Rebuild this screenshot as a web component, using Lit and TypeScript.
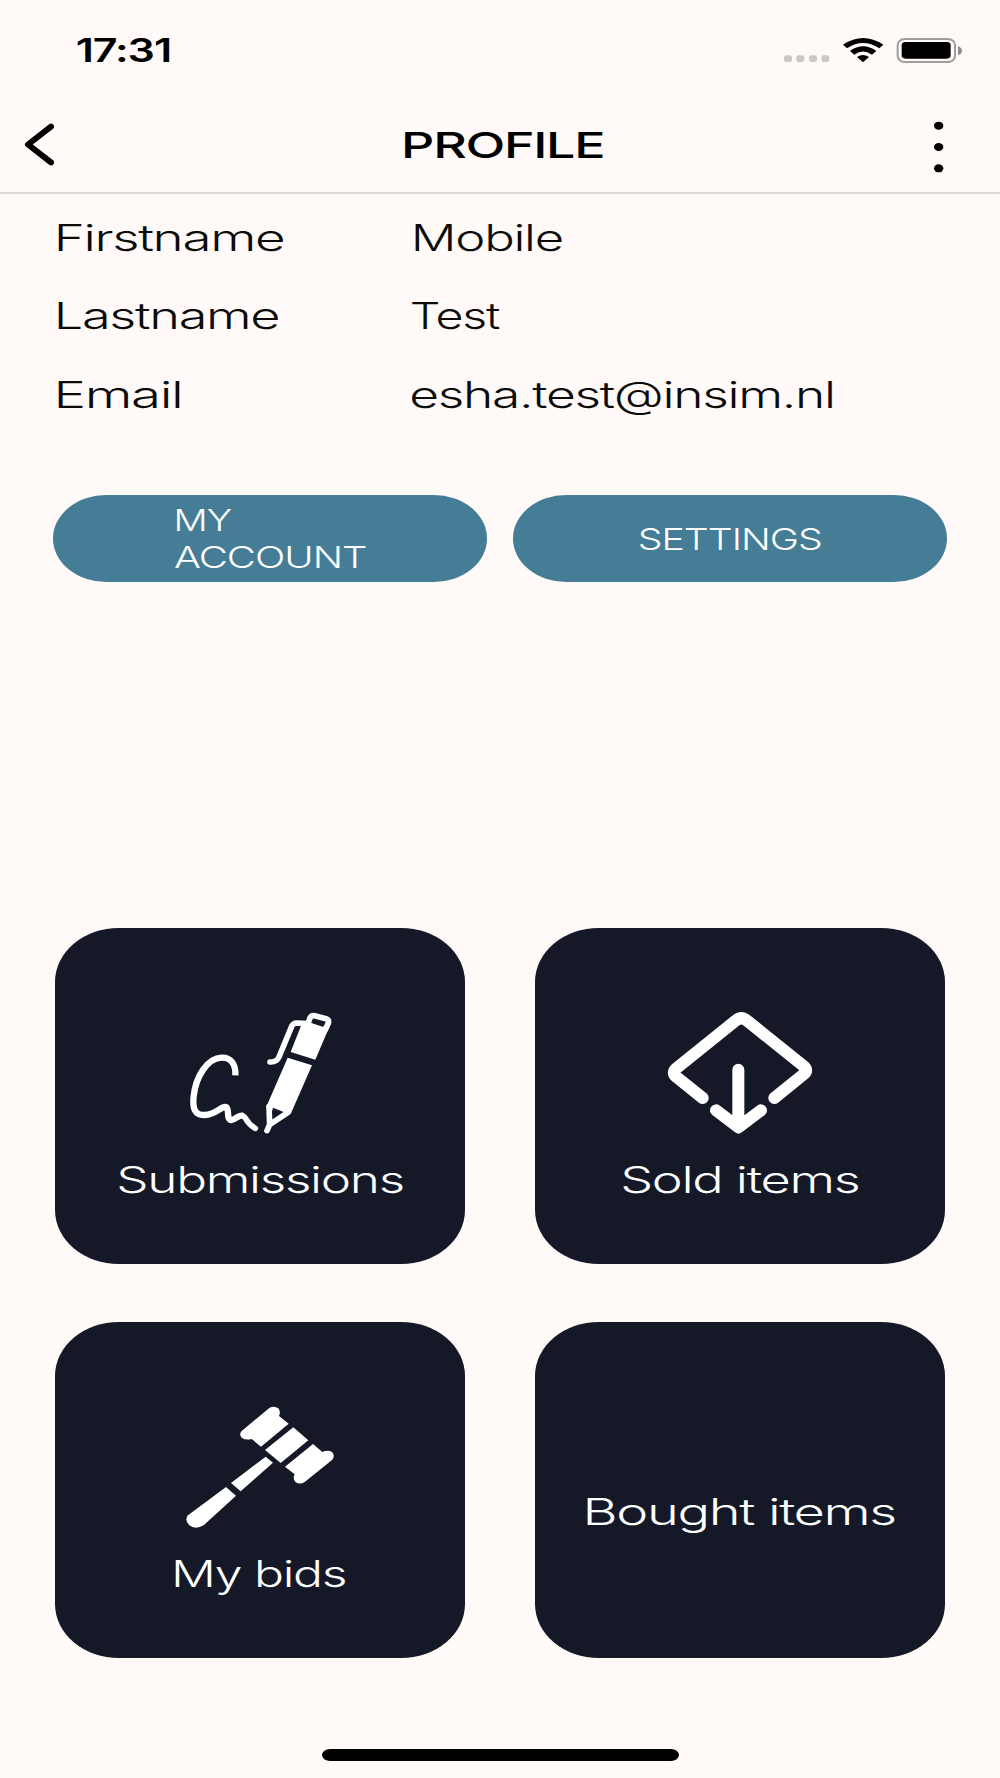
import { LitElement, html, css, svg, nothing } from "lit";
import { customElement, property } from "lit/decorators.js";

const FAMILY = 'Inter, "Liberation Sans", sans-serif';
const TRACKING = -0.025;

/** One line of text stretched sideways so that its ink fills the given width. */
@customElement("wide-text")
class WideText extends LitElement {
  @property() text = "";
  @property({ type: Number }) width = 100;
  @property({ type: Number }) size = 36.5;
  @property({ type: Number }) weight = 400;

  static styles = css`
    :host { display: block; flex: none; }
    .box { white-space: nowrap; }
    .ink { display: block; width: max-content; transform-origin: 0 50%; font-family: Inter, "Liberation Sans", sans-serif; letter-spacing: -0.025em; }
  `;

  render() {
    const ctx = document.createElement("canvas").getContext("2d")!;
    ctx.font = `${this.weight} ${this.size}px ${FAMILY}`;
    const m = ctx.measureText(this.text);
    const tracked = TRACKING * this.size * (this.text.length - 1);
    const scale = this.width / (m.actualBoundingBoxLeft + m.actualBoundingBoxRight + tracked);
    const shift = m.actualBoundingBoxLeft * scale;
    return html`<div class="box" style="width:${this.width}px"><span class="ink"
      style="font-size:${this.size}px;font-weight:${this.weight};transform:translateX(${shift}px) scaleX(${scale})">${this.text}</span></div>`;
  }
}

const pen = svg`
  <g fill="none" stroke="#fff" stroke-linecap="round" stroke-linejoin="round">
    <path stroke-width="19" stroke-linecap="butt" d="M196 256C198 222 182 202 155 203C112 205 78 258 71 318C67 356 74 376 104 375C138 374 152 350 166 351C180 353 168 388 183 390C197 391 202 374 218 377"/>
    <path stroke-width="17" d="M218 377C230 380 224 396 256 415"/>
    <path stroke-width="17" d="M414 101L380 99Q370 99 365 109L327 201Q320 217 300 216"/>
    <path stroke-width="17" d="M415 98L420 84Q424 75 434 77L468 86Q478 90 475 99L466 119"/>
    <path stroke-width="17" d="M297 350L299 404L291 422M299 404L353 368"/>
  </g>
  <g fill="#fff">
    <path d="M394 105L422 98L458 110L482 101L436 209L362 186Z"/>
    <path d="M353 203L426 226L362 372L343 367L309 353L306 364L289 350Z"/>
  </g>`;

const sold = svg`
  <g fill="none" stroke="#fff" stroke-width="36" stroke-linecap="round" stroke-linejoin="round">
    <path d="M158 324L78 260Q65 248 78 236L257 92Q274 78 291 92L462 229Q475 241 462 252L373 324"/>
    <path d="M265 239V408M198 361L265 412L333 361"/>
  </g>
  <path fill="#fff" d="M230 385L265 432L300 385Z"/>`;

const gavel = svg`
  <g fill="#fff">
    <path d="M215 122L298 53Q312 45 325 54Q333 64 327 77L356 100L273 169L245 146Q228 151 215 142Q206 133 215 122Z"/>
    <path d="M370 111L415 150L332 218L285 179Z"/>
    <path d="M429 161L457 185Q473 178 486 185Q496 196 487 208L404 275Q390 284 376 275Q367 264 374 252L345 229Z"/>
    <path d="M287 199L309 217L212 303L183 278Z"/>
    <path d="M168 290L198 316L101 405Q76 419 58 405Q42 389 54 375Z"/>
  </g>`;

@customElement("profile-tile")
class ProfileTile extends LitElement {
  @property() label = "";
  @property({ type: Number }) width = 200;
  @property() icon = "";

  static styles = css`
    :host { display: block; }
    .tile { box-sizing: border-box; height: 336.7px; padding-top: 62.4px; display: flex; flex-direction: column; align-items: center; gap: 5.6px; background: #151927; color: #fff; border-radius: 64px / 54px; line-height: 48px; }
    .plain { padding-top: 44px; justify-content: center; }
    svg { display: block; width: 180px; height: 160px; flex: none; }
    .label { padding-left: 0.5px; }
  `;

  render() {
    const art = this.icon === "pen" ? pen : this.icon === "sold" ? sold : gavel;
    return html`<div class="tile ${this.icon ? "" : "plain"}">
      ${this.icon
        ? html`<svg viewBox=${this.icon === "gavel" ? "0 -19 540 480" : "0 0 540 480"}>${art}</svg>`
        : nothing}
      <wide-text class="label" .text=${this.label} .width=${this.width} .weight=${300}></wide-text>
    </div>`;
  }
}

@customElement("app-root")
class AppRoot extends LitElement {
  static styles = css`
    :host { display: block; }
    .screen { width: 1000px; height: 1778px; overflow: hidden; background: #fffaf7; color: #000; display: flex; flex-direction: column; box-sizing: border-box; }
    svg { display: block; flex: none; }
    .status { height: 97px; box-sizing: border-box; padding: 34px 32.3px 0 77px; display: flex; justify-content: space-between; line-height: 34px; }
    .header { height: 97px; box-sizing: border-box; border-bottom: 2px solid #dddcd9; padding: 0 52.7px 0 23.3px; display: flex; align-items: center; justify-content: space-between; }
    .title { margin-left: 20.5px; line-height: 44px; }
    .more { padding-top: 4px; }
    .details { padding: 4.6px 54px 0 57.5px; display: flex; flex-direction: column; color: #0b0b0b; }
    .row { display: grid; grid-template-columns: 353.5px 1fr; height: 78.8px; line-height: 78.8px; }
    .mobile { padding-left: 4px; }
    .email { padding-left: 1px; }
    .actions { margin-top: 59.7px; padding: 0 53.3px; display: grid; grid-template-columns: 1fr 1fr; gap: 26.6px; }
    .pill { height: 87.7px; box-sizing: border-box; padding-top: 1px; display: flex; flex-direction: column; justify-content: center; align-items: center; background: #457d96; color: #fff; border-radius: 54px / 44px; line-height: 37px; }
    .lines { width: 192px; }
    .first { margin-left: 2px; }
    .tiles { margin-top: 345.3px; padding: 0 55px; display: grid; grid-template-columns: 410px 410px; column-gap: 70px; row-gap: 57.2px; }
    .home { margin: auto 0 17.5px 321.5px; width: 357.5px; height: 11.5px; border-radius: 8px / 6px; background: #000; }
  `;

  render() {
    return html`<div class="screen">
      <div class="status">
        <wide-text text="17:31" .width=${93} .size=${32} .weight=${600}></wide-text>
        <svg width="186.67" height="32" viewBox="123 102 560 96">
          <g fill="#cbc8c5">
            <rect x="132" y="166" width="24" height="20" rx="7"/><rect x="169" y="166" width="24" height="20" rx="7"/>
            <rect x="207" y="166" width="24" height="20" rx="7"/><rect x="244" y="166" width="24" height="20" rx="7"/>
          </g>
          <path d="M309 134Q369 94 430 134L418 145Q369 113 321 145Z"/>
          <path d="M330 153Q369 125 409 153L396 164Q369 145 343 164Z"/>
          <path d="M351 171Q369 159 387 171L369 187Z"/>
          <rect x="473" y="117" width="172" height="69" rx="21" ry="18" fill="none" stroke="#a09d9a" stroke-width="6"/>
          <rect x="485" y="126" width="147" height="50" rx="12" ry="10"/>
          <path fill="#8f8d8b" d="M654 138Q666 143 666 152Q666 161 654 166Z"/>
        </svg>
      </div>
      <div class="header">
        <svg width="33.33" height="48.33" viewBox="69 360 100 145"><path d="M153 380L84 433.5L153 487" fill="none" stroke="#000" stroke-width="18" stroke-linecap="round" stroke-linejoin="round"/></svg>
        <wide-text class="title" text="PROFILE" .width=${199} .size=${36} .weight=${550}></wide-text>
        <div class="more"><svg width="17.33" height="60" viewBox="570 349 52 180"><ellipse cx="596" cy="375" rx="14" ry="12"/><ellipse cx="596" cy="439" rx="14" ry="12"/><ellipse cx="596" cy="503" rx="14" ry="12"/></svg></div>
      </div>
      <div class="details">
        <div class="row"><wide-text text="Firstname" .width=${226} .weight=${300}></wide-text><wide-text class="mobile" text="Mobile" .width=${147.5} .weight=${300}></wide-text></div>
        <div class="row"><wide-text text="Lastname" .width=${221} .weight=${300}></wide-text><wide-text text="Test" .width=${89.5} .weight=${300}></wide-text></div>
        <div class="row"><wide-text text="Email" .width=${122} .weight=${300}></wide-text><wide-text class="email" text="esha.test@insim.nl" .width=${420.5} .weight=${300}></wide-text></div>
      </div>
      <div class="actions">
        <div class="pill"><div class="lines">
          <wide-text class="first" text="MY" .width=${56} .size=${30} .weight=${300}></wide-text>
          <wide-text text="ACCOUNT" .width=${192} .size=${30} .weight=${300}></wide-text>
        </div></div>
        <div class="pill"><wide-text text="SETTINGS" .width=${182.5} .size=${30} .weight=${300}></wide-text></div>
      </div>
      <div class="tiles">
        <profile-tile label="Submissions" .width=${283.5} icon="pen"></profile-tile>
        <profile-tile label="Sold items" .width=${235} icon="sold"></profile-tile>
        <profile-tile label="My bids" .width=${170} icon="gavel"></profile-tile>
        <profile-tile label="Bought items" .width=${307.5}></profile-tile>
      </div>
      <div class="home"></div>
    </div>`;
  }
}
